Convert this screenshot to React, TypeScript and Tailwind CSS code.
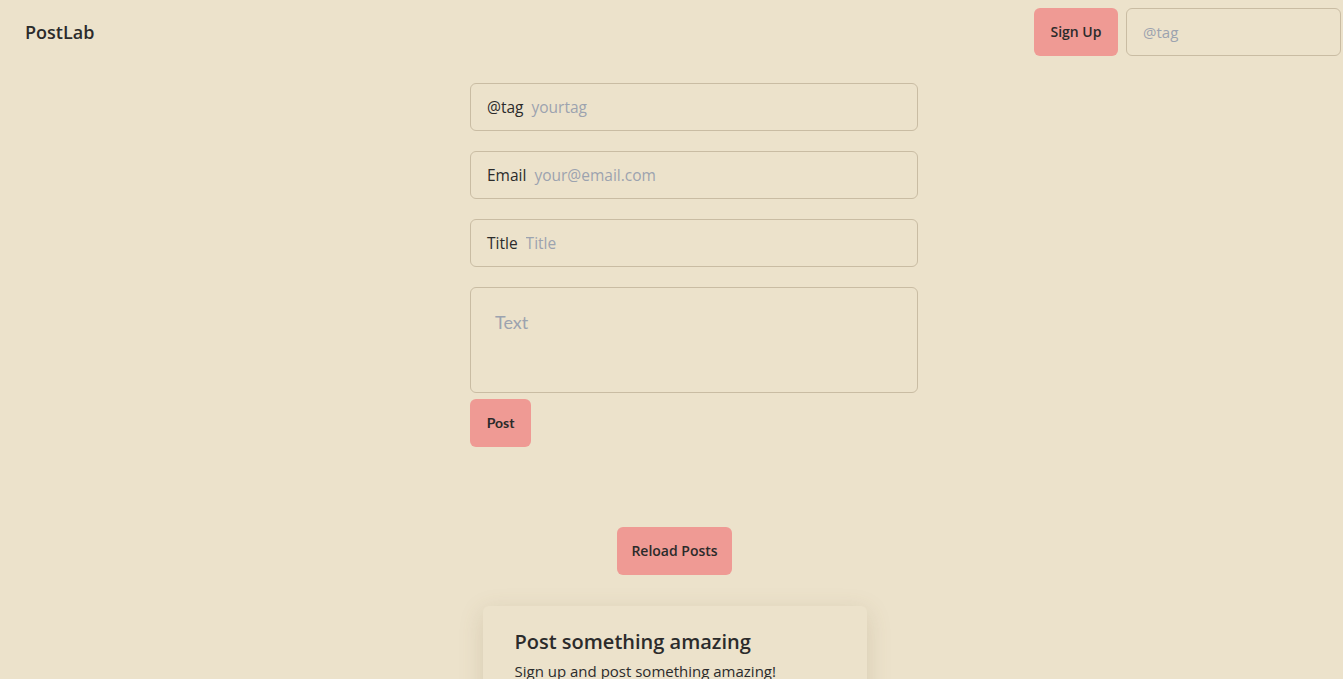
import React from "react";

const font = { fontFamily: '"Open Sans", "Noto Sans", sans-serif' };

function LabeledInput({ label, placeholder }: { label: string; placeholder: string }) {
  return (
    <label className="flex h-12 w-full items-center gap-2 rounded-md border border-[#c9bca3] bg-transparent px-4 pt-[2px] text-[15.5px] text-[#2b2b2b]">
      <span>{label}</span>
      <input
        className="min-w-0 flex-1 bg-transparent outline-none placeholder:text-[#9ca3af]"
        placeholder={placeholder}
      />
    </label>
  );
}

export default function App() {
  return (
    <div className="min-h-screen bg-[#ece2cb] text-[#2b2b2b]" style={font}>
      {/* Navbar */}
      <header className="flex h-[64px] items-center justify-between pl-[25px] pr-[2px]">
        <h1 className="text-lg font-semibold">PostLab</h1>
        <div className="flex items-center gap-2">
          <button className="h-12 w-[84px] rounded-md bg-[#ef9a94] text-sm font-semibold text-[#2b2b2b]">
            Sign Up
          </button>
          <input
            className="h-12 w-[215px] rounded-md border border-[#c9bca3] bg-transparent px-4 text-[15px] outline-none placeholder:text-[#9ca3af]"
            placeholder="@tag"
          />
        </div>
      </header>

      {/* Post form */}
      <div className="mt-[19px] flex justify-center pl-[45px]">
        <div className="flex w-[448px] flex-col">
          <div className="flex flex-col gap-5">
            <LabeledInput label="@tag" placeholder="yourtag" />
            <LabeledInput label="Email" placeholder="your@email.com" />
            <LabeledInput label="Title" placeholder="Title" />
            <textarea
              className="h-[106px] w-full resize-none rounded-md border border-[#c9bca3] bg-transparent px-6 py-5 text-lg outline-none placeholder:text-[#9ca3af]"
              style={{ fontFamily: "Lato, sans-serif" }}
              placeholder="Text"
            />
          </div>
          <button
            className="mt-[6px] h-12 w-[61px] rounded-md bg-[#ef9a94] text-sm font-bold text-[#2b2b2b]"
            style={{ fontFamily: "Lato, sans-serif" }}
          >
            Post
          </button>
        </div>
      </div>

      {/* Reload */}
      <div className="mt-[80px] flex justify-center pl-[6px]">
        <button className="h-12 w-[115px] rounded-md bg-[#ef9a94] text-sm font-semibold text-[#2b2b2b]">
          Reload Posts
        </button>
      </div>

      {/* Posts */}
      <div className="mt-[31px] flex justify-center pl-[6px]">
        <div className="w-[384px] rounded-md bg-[#ece2cb] px-8 pt-[22px] pb-8 shadow-[0_6px_24px_rgba(120,100,60,0.18)]">
          <h2 className="text-xl font-semibold">Post something amazing</h2>
          <p className="mt-1 text-[15px]">Sign up and post something amazing!</p>
        </div>
      </div>
    </div>
  );
}
